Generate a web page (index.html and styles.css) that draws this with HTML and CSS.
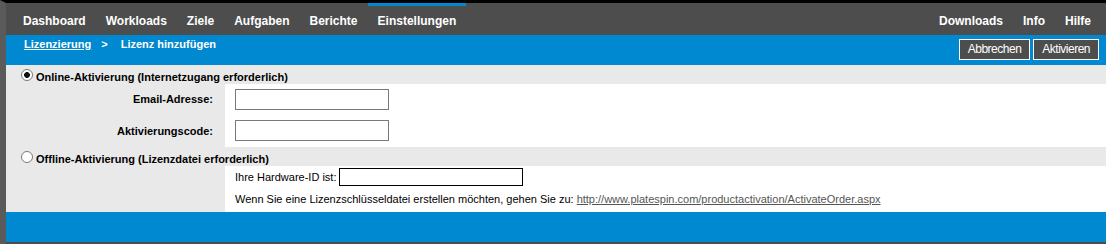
FILE: index.html
```html
<!DOCTYPE html>
<html lang="de">
<head>
    <meta charset="UTF-8">
    <meta name="viewport" content="width=device-width, initial-scale=1.0">
    <title>Lizenz hinzufügen</title>
    <link rel="stylesheet" href="styles.css">
</head>
<body>
    <div class="frame">
        <!-- Main navigation -->
        <div class="topnav">
            <ul class="nav-left">
                <li>Dashboard</li>
                <li>Workloads</li>
                <li>Ziele</li>
                <li>Aufgaben</li>
                <li>Berichte</li>
                <li class="active">Einstellungen</li>
            </ul>
            <ul class="nav-right">
                <li>Downloads</li>
                <li>Info</li>
                <li>Hilfe</li>
            </ul>
        </div>
        <!-- Breadcrumb and actions -->
        <div class="subnav">
            <div class="crumbs">
                <a href="#">Lizenzierung</a><span class="sep">&gt;</span><span>Lizenz hinzufügen</span>
            </div>
            <div class="actions">
                <button class="btn">Abbrechen</button>
                <button class="btn">Aktivieren</button>
            </div>
        </div>
        <!-- Activation options -->
        <div class="content">
            <div class="option-head">
                <input type="radio" class="radio" name="mode" id="online" checked>
                <label for="online">Online-Aktivierung (Internetzugang erforderlich)</label>
            </div>
            <div class="form-row">
                <label class="field-label" for="email">Email-Adresse:</label>
                <div class="field"><input type="text" class="text-input" id="email"></div>
            </div>
            <div class="form-row">
                <label class="field-label" for="code">Aktivierungscode:</label>
                <div class="field last"><input type="text" class="text-input" id="code"></div>
            </div>
            <div class="option-head">
                <input type="radio" class="radio" name="mode" id="offline">
                <label for="offline">Offline-Aktivierung (Lizenzdatei erforderlich)</label>
            </div>
            <div class="form-row">
                <div class="field-label"></div>
                <div class="field offline">
                    <div class="hw-line">Ihre Hardware-ID ist:<input type="text" class="hw-input"></div>
                    <p class="hint">Wenn Sie eine Lizenzschlüsseldatei erstellen möchten, gehen Sie zu: <a href="#">http://www.platespin.com/productactivation/ActivateOrder.aspx</a></p>
                </div>
            </div>
        </div>
        <div class="footer"></div>
    </div>
</body>
</html>
```

FILE: styles.css
```css
/* License activation page */
body {
    margin: 0;
    background: #000;
    font-family: "Liberation Sans", Arial, sans-serif;
    font-size: 11px;
    color: #000;
}

.frame {
    border-top: 3px solid #000;
    border-left: 6px solid #5a5a5a;
}

/* Top navigation */
.topnav {
    display: flex;
    justify-content: space-between;
    height: 32px;
    background: #4d4d4d;
}

.nav-left,
.nav-right {
    list-style: none;
    margin: 0;
    display: flex;
}

.nav-left {
    padding: 0 0 0 7px;
}

.nav-right {
    padding: 0 5px 0 0;
}

.topnav li {
    padding: 5px 10px 0;
    line-height: 27px;
    font-size: 12px;
    font-weight: bold;
    color: #fff;
}

.topnav li.active {
    box-shadow: inset 0 3px 0 #0088d0;
}

/* Breadcrumb bar */
.subnav {
    display: flex;
    justify-content: space-between;
    align-items: flex-start;
    height: 30px;
    background: #0088d0;
}

.crumbs {
    padding: 3px 0 0 18px;
    line-height: 13px;
    font-weight: bold;
    color: #fff;
}

.crumbs a {
    color: #fff;
}

.sep {
    margin: 0 13px 0 10px;
}

.actions {
    display: flex;
    gap: 3px;
    padding: 4px 7px 0 0;
}

.btn {
    height: 21px;
    padding: 0 8px;
    border: 1px solid #fff;
    border-radius: 0;
    background: #4d4d4d;
    color: #fff;
    font-family: "Liberation Sans", Arial, sans-serif;
    font-size: 12px;
    letter-spacing: -0.5px;
    line-height: 19px;
}

/* Options */
.content {
    background: #e9e9e9;
}

.option-head {
    display: flex;
    align-items: flex-start;
    height: 19px;
    box-sizing: border-box;
    padding: 4px 0 0 15px;
    font-weight: bold;
}

.option-head label {
    margin-top: 2px;
    line-height: 13px;
}

.radio {
    appearance: none;
    width: 12px;
    height: 12px;
    margin: 0 3px 0 0;
    border: 1px solid #7a7a7a;
    border-radius: 50%;
    background: #fff;
}

.radio:checked {
    background: radial-gradient(circle, #111 0 2.6px, #fff 3.2px);
}

.form-row {
    display: grid;
    grid-template-columns: 219px 1fr;
    align-items: center;
}

.field-label {
    padding-right: 12px;
    text-align: right;
    font-weight: bold;
    line-height: 13px;
}

.field {
    align-self: stretch;
    padding: 5px 10px;
    background: #fff;
}

.field.last {
    padding-bottom: 6px;
}

.text-input {
    display: block;
    width: 154px;
    height: 21px;
    box-sizing: border-box;
    border: 1px solid #7a7a7a;
    padding: 0 2px;
}

.field.offline {
    padding: 2px 10px 6px;
}

.hw-line {
    display: flex;
    align-items: center;
    line-height: 13px;
}

.hw-input {
    width: 184px;
    height: 18px;
    box-sizing: border-box;
    margin-left: 3px;
    border: 1px solid #000;
    padding: 0 2px;
}

.hint {
    margin: 7px 0 0;
    line-height: 13px;
}

.hint a {
    color: #555;
}

.footer {
    height: 30px;
    background: #0088d0;
    border-bottom: 2px solid #4d4d4d;
}
```
